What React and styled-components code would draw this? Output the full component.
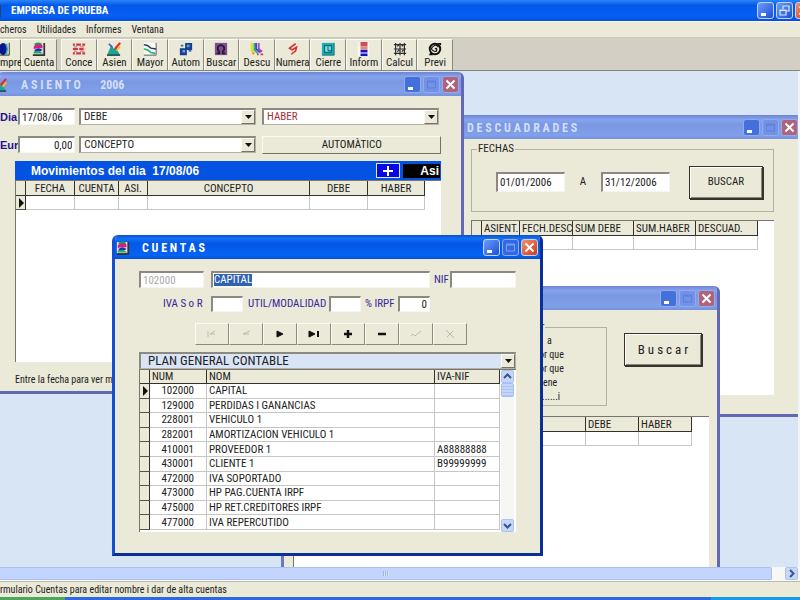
import React from "react";
import styled, { createGlobalStyle, css } from "styled-components";

const face = "#ebe9d8";
const ui = `"Roboto Condensed", Roboto, "Liberation Sans", sans-serif`;

const GlobalStyle = createGlobalStyle`
  *, *::before, *::after { box-sizing: border-box; }
  body { margin: 0; overflow: hidden; }
  button, input, select { font: inherit; color: inherit; margin: 0; border-radius: 0; }
`;

const Page = styled.div`
  display: flex;
  flex-direction: column;
  height: 100vh;
  overflow: hidden;
  background: ${face};
  color: #222;
  font: 11px/14px ${ui};
`;

const AppTitle = styled.header`
  display: flex;
  align-items: center;
  flex: 0 0 21px;
  gap: 9px;
  overflow: hidden;
  background: linear-gradient(#2a86fb, #0458e6 25%, #0460f4 75%, #0450d8);
  color: #fff;
`;

const AppIcon = styled.svg`
  flex: none;
  width: 14px;
  height: 14px;
  margin-left: -12px;
`;

const AppName = styled.h1`
  flex: 1;
  margin: 0;
  font: bold 11px/14px ${ui};
`;

const Menu = styled.nav`
  display: flex;
  align-items: center;
  flex: 0 0 17px;
  gap: 10px;
  border-top: 1px solid #f8f8f4;
  border-bottom: 1px solid #c9c6ba;
`;

const MenuItem = styled.button`
  flex: 0 0 auto;
  min-width: 22px;
  padding: 0;
  border: 0;
  background: none;
  font-size: 10px;
  line-height: 12px;
  text-align: left;
`;

const ToolStrip = styled.div`
  display: flex;
  flex: 0 0 33px;
  padding-top: 1px;
  overflow: hidden;
  background: #d3cfc5;
  border-bottom: 1px solid #85857f;
`;

const ToolGroup = styled.div`
  display: grid;
  flex: none;
  grid-template-columns: ${(p) => p.$columns};
  width: ${(p) => p.$width}px;
  margin-left: ${(p) => p.$start}px;
`;

const ToolButton = styled.button`
  display: flex;
  flex-direction: column;
  align-items: center;
  justify-content: space-between;
  min-width: 0;
  padding: 2px 0 1px;
  border: 1px solid;
  border-color: #fbfaf3 #8b897c #8b897c #fbfaf3;
  background: ${face};
  line-height: 13px;
  svg { width: 14px; height: 14px; flex: none; }
  ${(p) => p.$edge && css`align-items: flex-start; border-left: 0; svg { margin-left: -3px; }`}
`;

const Desktop = styled.main`
  position: relative;
  flex: 1;
  overflow: hidden;
  background: #d7e5f5;
  border-right: 2px solid #f0f5fa;
`;

/* Windows lie freely on the desktop and overlap each other. */
const Frame = styled.section`
  position: absolute;
  display: flex;
  flex-direction: column;
  left: ${(p) => p.$x}px;
  top: ${(p) => p.$y}px;
  width: ${(p) => p.$w}px;
  border: 3px solid ${(p) => (p.$active ? "#1450d0" : "#6c76c6")};
  border-top: 0;
  border-right-color: ${(p) => (p.$active ? "#0a2f9a" : "#6268b4")};
  border-bottom-color: ${(p) => (p.$active ? "#0a2f9a" : "#6268b4")};
  border-radius: 6px 6px 0 0;
  background: ${face};
  overflow: hidden;
`;

const Caption = styled.div`
  display: flex;
  align-items: center;
  height: 24px;
  gap: 12px;
  padding: 1px 2px 0 1px;
  color: ${(p) => (p.$active ? "#fff" : "#d3dff8")};
  background: ${(p) =>
    p.$active
      ? "linear-gradient(#0a50c8, #1270f8 15%, #0458e4 35%, #0464f4 85%, #0450d8)"
      : "linear-gradient(#6f85d4, #86a4ee 20%, #7a97e2 40%, #80a0ea 85%, #7890dc)"};
`;

const CaptionIcon = styled.svg`
  flex: none;
  width: 14px;
  height: 14px;
  margin-left: ${(p) => p.$cut || 0}px;
`;

const CaptionText = styled.h2`
  flex: 1;
  margin: 0;
  padding-left: ${(p) => p.$indent || 0}px;
  font: bold 12px/16px ${ui};
  white-space: pre;
`;

const CaptionButtons = styled.div`
  display: flex;
  gap: 2px;
  flex: none;
  margin-right: ${(p) => p.$cut || 0}px;
`;

const CaptionButton = styled.button`
  width: 17px;
  height: 17px;
  padding: 0;
  border: 1px solid ${(p) => (p.$dim ? "#94aaee" : "#c3d2fa")};
  border-radius: 3px;
  background: ${(p) => p.$fill};
  svg { display: block; width: 15px; height: 15px; }
`;

const Body = styled.div`
  display: flex;
  flex-direction: column;
  padding: ${(p) => p.$pad};
`;

const Row = styled.div`
  display: flex;
  align-items: center;
  height: ${(p) => p.$h || 17}px;
  margin: 0 0 ${(p) => p.$after || 0}px ${(p) => p.$indent || 0}px;
`;

const Label = styled.label`
  flex: 0 0 ${(p) => p.$w}px;
  padding-left: ${(p) => p.$indent || 0}px;
  color: #35289c;
  white-space: nowrap;
  ${(p) => p.$strong && css`color: #1c1490; font-weight: bold; font-family: "Liberation Sans", sans-serif; font-size: 11px;`}
`;

const Field = styled.input`
  flex: 0 0 ${(p) => p.$w}px;
  width: ${(p) => p.$w}px;
  height: ${(p) => p.$h || 17}px;
  margin-right: ${(p) => p.$after || 0}px;
  padding: 0 2px;
  border: 1px solid;
  border-width: 2px 1px 1px 2px;
  border-color: #8c8a80 #f6f5ee #f6f5ee #8c8a80;
  background: #fff;
  text-align: ${(p) => (p.$right ? "right" : "left")};
  &:disabled { color: #aaa; }
`;

const PickedField = styled.div`
  display: flex;
  align-items: center;
  flex: 0 0 219px;
  height: 17px;
  padding: 0 1px;
  border: 1px solid;
  border-width: 2px 1px 1px 2px;
  border-color: #8c8a80 #f6f5ee #f6f5ee #8c8a80;
  background: #fff;
`;

const PickedInput = styled.input`
  width: 38px;
  height: 12px;
  padding: 0;
  border: 0;
  outline: 0;
  background: #2f62b0;
  color: #fff;
`;

const ComboBox = styled.div`
  display: grid;
  grid-template-columns: 1fr 14px;
  flex: ${(p) => (p.$w ? `0 0 ${p.$w}px` : "none")};
  height: 17px;
  margin-left: ${(p) => p.$gap || 0}px;
  border: 1px solid;
  border-width: 2px 1px 1px 2px;
  border-color: #8c8a80 #b5b2a5 #b5b2a5 #8c8a80;
  background: ${(p) => p.$bg || "#fff"};
  color: ${(p) => p.$color || "#222"};
  font-size: ${(p) => p.$size || 11}px;
`;

const ComboSelect = styled.select`
  grid-area: 1 / 1 / 2 / 3;
  min-width: 0;
  width: 100%;
  padding: 0 0 0 ${(p) => p.$pad}px;
  border: 0;
  appearance: none;
  background: transparent;
`;

const ComboArrow = styled.span`
  grid-area: 1 / 2 / 2 / 3;
  display: flex;
  align-items: center;
  justify-content: center;
  border: 1px solid;
  border-color: #fbfaf3 #75736a #75736a #fbfaf3;
  background: ${face};
  pointer-events: none;
  svg { width: 7px; height: 4px; }
`;

const PushButton = styled.button`
  width: ${(p) => p.$w}px;
  height: ${(p) => p.$h}px;
  margin-left: ${(p) => p.$gap || 0}px;
  padding: 0;
  flex: none;
  background: ${face};
  font-size: ${(p) => p.$size || 11}px;
  white-space: pre;
  border: 1px solid;
  border-color: #fbfaf3 #757369 #757369 #fbfaf3;
  ${(p) => p.$default && css`border: 1px solid #35332a; box-shadow: inset 1px 1px #fff, inset -1px -1px #8a887c, 1px 1px #35332a;`}
`;

const DayBar = styled.div`
  display: flex;
  align-items: center;
  height: 19px;
  padding: 1px 1px 1px 16px;
  gap: 3px;
  background: #0452e2;
  color: #fff;
  font: bold 12px/16px "Liberation Sans", sans-serif;
  white-space: pre;
  span { flex: 1; }
`;

const AddButton = styled.button`
  display: flex;
  align-items: center;
  justify-content: center;
  width: 24px;
  height: 15px;
  padding: 0;
  border: 1px solid #dbe6fb;
  background: #0808e4;
  svg { width: 10px; height: 10px; }
`;

const EntryTag = styled.output`
  width: 37px;
  height: 14px;
  padding-right: 1px;
  background: #000;
  font-size: 12px;
  line-height: 15px;
  text-align: right;
`;

const Sheet = styled.div`
  display: flex;
  height: ${(p) => p.$h}px;
  border-left: 1px solid #77756c;
  border-top: 1px solid #77756c;
  background: #fff;
  overflow: hidden;
`;

const Table = styled.table`
  flex: none;
  width: ${(p) => p.$w}px;
  ${(p) => p.$h && css`height: ${p.$h}px;`}
  align-self: flex-start;
  table-layout: fixed;
  border-collapse: separate;
  border-spacing: 0;
  th, td {
    padding: 0 2px;
    overflow: hidden;
    white-space: nowrap;
    line-height: 13px;
  }
  thead th {
    height: ${(p) => p.$head || 15}px;
    background: ${face};
    border-right: 1px solid #33312b;
    border-bottom: 1px solid #33312b;
    font-weight: normal;
    text-align: ${(p) => (p.$centre ? "center" : "left")};
  }
  tbody td {
    height: 14px;
    border-right: 1px solid #c6c6c6;
    border-bottom: 1px solid #c6c6c6;
  }
`;

const Marker = styled.th`
  && {
    height: 14px;
    padding: 0;
    background: ${face};
    border-right: 1px solid #33312b;
    border-bottom: 1px solid #55534a;
  }
  svg { display: block; width: 6px; height: 10px; margin: 0 auto; }
`;

const Code = styled.td`
  && { text-align: right; padding-right: 12px; }
`;

const ScrollColumn = styled.div`
  display: flex;
  flex-direction: column;
  width: 13px;
  margin-left: 1px;
  background: #f6f6f2;
`;

const ScrollButton = styled.button`
  flex: 0 0 13px;
  height: 13px;
  padding: 0;
  border: 1px solid #aec3f4;
  border-radius: 2px;
  background: #c6d6fb;
  display: flex;
  align-items: center;
  justify-content: center;
  svg { width: 9px; height: 9px; }
`;

const Thumb = styled.div`
  flex: 0 0 14px;
  border: 1px solid #a8bdf2;
  border-radius: 2px;
  background: repeating-linear-gradient(#c6d6fb 0 2px, #adc2f3 2px 3px);
`;

const Spacer = styled.div`
  flex: 1;
`;

const Nav = styled.div`
  display: grid;
  grid-template-columns: repeat(8, 34px);
  height: 22px;
  margin: 11px 0 7px 56px;
`;

const NavButton = styled.button`
  display: flex;
  align-items: center;
  justify-content: center;
  padding: 0;
  border: 1px solid;
  border-color: #fbfaf3 #8b897c #8b897c #fbfaf3;
  background: ${face};
  svg { width: 12px; height: 10px; }
`;

const Group = styled.fieldset`
  flex: 0 0 ${(p) => p.$w}px;
  min-width: 0;
  margin: 0;
  padding: 0 0 0 ${(p) => p.$indent}px;
  height: ${(p) => p.$h}px;
  border: 1px solid #b3b1a4;
`;

const Legend = styled.legend`
  margin-left: ${(p) => p.$shift}px;
  padding: 0 1px;
`;

const Between = styled.span`
  flex: 0 0 36px;
  text-align: center;
`;

const Hint = styled.p`
  margin: 0;
  font-size: 10px;
  line-height: 14px;
  white-space: nowrap;
  padding-left: ${(p) => p.$indent || 0}px;
`;

const Search = styled.div`
  display: flex;
  height: 106px;
  padding-top: 10px;
`;

const SearchButtonSlot = styled.div`
  padding: 13px 0 0 17px;
`;

const HScroll = styled.div`
  display: flex;
  flex: 0 0 14px;
  padding: 0 2px 1px 0;
  gap: 13px;
  background: #f7f7f4;
`;

const HThumb = styled.div`
  flex: 1;
  display: flex;
  align-items: center;
  justify-content: center;
  border: 1px solid #a9c0f4;
  border-left: 0;
  border-radius: 0 2px 2px 0;
  background: #c3d4fd;
  &::after {
    content: "";
    width: 6px;
    height: 5px;
    background: repeating-linear-gradient(90deg, #9db5ee 0 1px, #d8e4ff 1px 2px);
  }
`;

const Status = styled.footer`
  display: flex;
  align-items: center;
  flex: 0 0 16px;
  border-top: 1px solid #bdbaae;
  font-size: 10px;
`;

const Taskbar = styled.div`
  display: grid;
  grid-template-columns: 65px 1fr 89px;
  flex: 0 0 3px;
  background: #2a6cdc;
`;

const Start = styled.div`
  background: #4aa858;
`;

const Tray = styled.div`
  grid-column: 3;
  background: #1a9ce4;
`;

const art = {
  empre: <><path d="M2 1h12v14H2z" fill="#f4e8b0" /><ellipse cx="7" cy="8" rx="5" ry="7" fill="#08178f" /><path d="M9 2q4 6 0 12h3V2z" fill="#18b4dc" /><path d="M14 1v14H2" fill="none" stroke="#222" /></>,
  cuenta: <><path d="M1 1h13v13H1z" fill="#f4d8e4" /><path d="M2 5q5-6 10-1v3H6L2 8z" fill="#d81c8c" /><path d="M3 3q5-3 8 0" stroke="#18a040" strokeWidth="2" fill="none" /><path d="M3 9q4-4 9 0l-3 2H3z" fill="#1930bc" /><path d="M2 11l6-1 5 3H2z" fill="#18b850" /><path d="M14 1v14H1" fill="none" stroke="#333" strokeWidth="2" /></>,
  conce: <><path d="M1 3h14M1 8h14M1 13h14" stroke="#c83c48" strokeWidth="2.4" /><path d="M4 1v4M11 1v4M7.500 6v4M14 6v4M4 11v4M11 11v4" stroke="#f0dcd0" strokeWidth="1.500" /><path d="M2 5.500h4M9 5.500h5M2 10.500h4M9 10.500h5" stroke="#d87880" strokeWidth="1.500" /></>,
  asien: <><path d="M0 15L5 3l3 5 2-2 5 9z" fill="#1ca494" /><path d="M2 2l4 4" stroke="#4460b8" strokeWidth="2" fill="none" /><path d="M15 1L9 8" stroke="#e82830" strokeWidth="2.500" /><path d="M15 5l-4 5" stroke="#e8c820" strokeWidth="2" /><path d="M0 15h15" stroke="#203040" strokeWidth="1.500" /></>,
  mayor: <><path d="M1 1h14v14H1z" fill="#fbfbf6" /><path d="M1 3l4 1 4 3 6 1" stroke="#203060" strokeWidth="1.600" fill="none" /><path d="M1 8l4 1 4 3 5 1" stroke="#28b860" strokeWidth="2" fill="none" /><path d="M15 1v14H1" stroke="#446" fill="none" /></>,
  autom: <><path d="M7 1h8v8H7zM1 7h8v8H1z" fill="#1b3f8c" /><path d="M9 3h3v3H9zM4 9h3v3H4z" fill="#58a8dc" /><path d="M11 10h3M2 4h3" stroke="#3b70b0" strokeWidth="2" /></>,
  buscar: <><path d="M1 1h14v14H1z" fill="#80508c" /><path d="M3 13h3V11Q3 8 5 5q3-3 6 0 2 3-1 6v2h3" stroke="#281838" strokeWidth="2" fill="none" /></>,
  descu: <><path d="M2 1v8l3 5" stroke="#e8d820" strokeWidth="2.500" fill="none" /><path d="M5 1v8l4 4" stroke="#28b868" strokeWidth="2" fill="none" /><path d="M7 1v7l5 4" stroke="#3848d0" strokeWidth="2.200" fill="none" /><path d="M10 1v7l4 3" stroke="#b040c0" strokeWidth="2" fill="none" /><path d="M8 14h2M12 14h3M3 13h1" stroke="#d83850" strokeWidth="2" /></>,
  numera: <path d="M11 2L4 7l3 2 5-3-1 4-5 4" stroke="#d82c30" strokeWidth="1.800" fill="none" />,
  cierre: <><path d="M1 1h14v14H1z" fill="#14b8bc" /><path d="M4 4h8v8H4z" fill="#7ce4e0" stroke="#106c78" strokeWidth="1.500" /><path d="M8 5v5h4" stroke="#083c58" fill="none" /><path d="M15 1v14H1" stroke="#145868" fill="none" /></>,
  inform: <><path d="M1 0h13v16H1z" fill="#fbf8f4" /><path d="M4 0h8v5H4z" fill="#c85058" /><path d="M4 5h8v4H4z" fill="#dc8888" /><path d="M4 9h8v3H4zM4 13h8v3H4z" fill="#1414bc" /></>,
  calcul: <path d="M1 3h14M1 8h14M1 13h14M3 1v14M8 1v14M13 1v14M5 5l2-2M10 5l2-2M5 11l2-2M10 11l2-2" stroke="#303030" strokeWidth="1.400" />,
  previ: <><circle cx="8" cy="8" r="6" fill="none" stroke="#111" strokeWidth="2.200" /><path d="M8 8q2-2 2 1t-4 1 0-5 6 1" fill="none" stroke="#111" strokeWidth="1.400" /><path d="M1 15h5l-3-4zM10 1h5v3z" fill="#111" /></>,
};

const Art = ({ name }) => <svg viewBox="0 0 16 16" aria-hidden="true">{art[name]}</svg>;

const tools = [
  ["conce", "Conce"], ["asien", "Asien"], ["mayor", "Mayor"], ["autom", "Autom"],
  ["buscar", "Buscar"], ["descu", "Descu"], ["numera", "Numera"], ["cierre", "Cierre"],
  ["inform", "Inform"], ["calcul", "Calcul"], ["previ", "Previ"],
];

const accounts = [
  ["102000", "CAPITAL", ""],
  ["129000", "PERDIDAS I GANANCIAS", ""],
  ["228001", "VEHICULO 1", ""],
  ["282001", "AMORTIZACION VEHICULO 1", ""],
  ["410001", "PROVEEDOR 1", "A88888888"],
  ["430001", "CLIENTE 1", "B99999999"],
  ["472000", "IVA SOPORTADO", ""],
  ["473000", "HP PAG.CUENTA IRPF", ""],
  ["475000", "HP RET.CREDITORES IRPF", ""],
  ["477000", "IVA REPERCUTIDO", ""],
];

const navGlyphs = [
  ["Primero", true, <path d="M2 2v6M9 2L4 5h5" />],
  ["Anterior", true, <path d="M10 2L3 5h6" />],
  ["Siguiente", false, <path d="M3 2l6 3-6 3z" fill="#111" />],
  ["Último", false, <><path d="M1 2l6 3-6 3z" fill="#111" /><path d="M10 2v6" strokeWidth="2" /></>],
  ["Añadir", false, <path d="M6 1v8M2 5h8" strokeWidth="2.500" />],
  ["Borrar", false, <path d="M2 5h8" strokeWidth="2.500" />],
  ["Aceptar", true, <path d="M1 7l2-2 2 2 6-5" />],
  ["Cancelar", true, <path d="M2 1l8 8M9 2L3 8" />],
];

const WindowButtons = ({ active, restore, cut }) => (
  <CaptionButtons $cut={cut}>
    <CaptionButton aria-label="Minimizar" $dim={!active} $fill={active ? "linear-gradient(135deg,#6c9cf8,#1c50d4)" : "#4470dc"}>
      <svg viewBox="0 0 15 15"><path d="M3 10h5v3H3z" fill="#fff" /></svg>
    </CaptionButton>
    <CaptionButton aria-label="Restaurar" $dim={!restore} $fill={restore ? "linear-gradient(135deg,#6c9cf8,#1c50d4)" : active ? "#3068e8" : "#7292e8"}>
      {restore ? (
        <svg viewBox="0 0 15 15"><path d="M6 6V3h6v5h-3M3 7h6v5H3zM3 7.500h6" fill="none" stroke="#dce6fc" strokeWidth="1.200" /></svg>
      ) : (
        <svg viewBox="0 0 15 15"><path d="M3.500 4h8v7h-8zM3.500 5h8" fill="none" stroke={active ? "#7ea2f4" : "#5e7cd8"} /></svg>
      )}
    </CaptionButton>
    <CaptionButton aria-label="Cerrar" $dim={!active} $fill={active ? "linear-gradient(135deg,#f09070,#d03c14)" : "#b0647c"}>
      <svg viewBox="0 0 15 15"><path d="M3.500 3.500l8 8M11.500 3.500l-8 8" stroke="#fff" strokeWidth="2" /></svg>
    </CaptionButton>
  </CaptionButtons>
);

const Combo = ({ label, value, pad = 3, ...box }) => (
  <ComboBox {...box}>
    <ComboSelect aria-label={label} $pad={pad} defaultValue={value}><option>{value}</option></ComboSelect>
    <ComboArrow><svg viewBox="0 0 7 4"><path d="M0 0h7L3.500 4z" fill="#111" /></svg></ComboArrow>
  </ComboBox>
);

const Columns = ({ widths }) => (
  <colgroup>{widths.map((w, i) => <col key={i} width={w} />)}</colgroup>
);

const Pointer = () => <svg viewBox="0 0 6 10"><path d="M1 0l5 5-5 5z" fill="#111" /></svg>;

const EmptyTable = ({ heads, widths, centre, current }) => (
  <Table $w={widths.reduce((a, b) => a + b, 0)} $centre={centre}>
    <Columns widths={widths} />
    <thead><tr><th aria-label="Fila" />{heads.map((h, i) => <th key={i} scope="col">{h}</th>)}</tr></thead>
    <tbody><tr><Marker scope="row">{current && <Pointer />}</Marker>{heads.map((h, i) => <td key={i} />)}</tr></tbody>
  </Table>
);

const Asiento = () => (
  <Frame $x={-3} $y={1} $w={467}>
    <Caption>
      <CaptionIcon viewBox="0 0 16 16" $cut={-8}>{art.asien}</CaptionIcon>
      <CaptionText $indent={2}>{"A S I E N T O       2006"}</CaptionText>
      <WindowButtons />
    </Caption>
    <Body $pad="12px 20px 4px 0">
      <Row $after={11}>
        <Label $w={18} $strong htmlFor="dia">Dia</Label>
        <Field id="dia" $w={57} defaultValue="17/08/06" />
        <Combo label="Debe" value="DEBE" $w={177} $gap={4} />
        <Combo label="Haber" value="HABER" $w={177} $gap={6} $color="#a8323a" />
      </Row>
      <Row $after={8}>
        <Label $w={18} $strong htmlFor="eur">Eur</Label>
        <Field id="eur" $w={57} $right defaultValue="0,00" />
        <Combo label="Concepto" value="CONCEPTO" $w={177} $gap={4} />
        <PushButton $w={179} $h={18} $gap={6}>AUTOMÀTICO</PushButton>
      </Row>
      <Body $pad="0 0 0 15px">
        <DayBar>
          <span>{"Movimientos del dia  17/08/06"}</span>
          <AddButton aria-label="Añadir"><svg viewBox="0 0 10 10"><path d="M5 0v10M0 5h10" stroke="#fff" strokeWidth="2" /></svg></AddButton>
          <EntryTag>Asi</EntryTag>
        </DayBar>
        <Sheet $h={182}>
          <EmptyTable centre current heads={["FECHA", "CUENTA", "ASI.", "CONCEPTO", "DEBE", "HABER"]} widths={[10, 49, 44, 29, 162, 58, 57]} />
        </Sheet>
        <Body $pad="11px 0 0"><Hint>Entre la fecha para ver m</Hint></Body>
      </Body>
    </Body>
  </Frame>
);

const Descuadrades = () => (
  <Frame $x={440} $y={44} $w={363}>
    <Caption>
      <CaptionText $indent={23}>{"D E S C U A D R A D E S"}</CaptionText>
      <WindowButtons />
    </Caption>
    <Body $pad="3px 26px 19px 28px">
      <Group $w={70} $h={70} $indent={24}>
        <Legend $shift={-19}>FECHAS</Legend>
        <Row $h={52}>
          <Field aria-label="Desde" $w={69} $h={20} defaultValue="01/01/2006" />
          <Between>A</Between>
          <Field aria-label="Hasta" $w={69} $h={20} defaultValue="31/12/2006" />
          <PushButton $default $w={74} $h={33} $gap={19}>BUSCAR</PushButton>
        </Row>
      </Group>
      <Body $pad="8px 0 0">
        <Sheet $h={175}>
          <EmptyTable heads={["ASIENT.", "FECH.DESC", "SUM DEBE", "SUM.HABER", "DESCUAD."]} widths={[10, 38, 53, 61, 62, 62]} />
        </Sheet>
      </Body>
    </Body>
  </Frame>
);

const Consulta = () => (
  <Frame $x={281} $y={215} $w={439}>
    <Caption><CaptionText /><WindowButtons /></Caption>
    <Body $pad="0 8px 8px 9px">
      <Search>
        <Group $w={314} $h={86} $indent={245}>
          <Legend $shift={1}>r</Legend>
          <Hint $indent={8}>a</Hint>
          <Hint>or que</Hint>
          <Hint>or que</Hint>
          <Hint $indent={4}>ene</Hint>
          <Hint $indent={3}>......i</Hint>
        </Group>
        <SearchButtonSlot><PushButton $default $w={78} $h={33} $size={13}>{"B u s c a r"}</PushButton></SearchButtonSlot>
      </Search>
      <Sheet $h={180}>
        <EmptyTable heads={["", "", "DEBE", "HABER"]} widths={[10, 60, 222, 53, 53]} />
      </Sheet>
    </Body>
  </Frame>
);

const Cuentas = () => (
  <Frame $active $x={112} $y={164} $w={431}>
    <Caption $active>
      <CaptionIcon viewBox="0 0 16 16">{art.cuenta}</CaptionIcon>
      <CaptionText>{"C U E N T A S"}</CaptionText>
      <WindowButtons active />
    </Caption>
    <Body $pad="12px 24px 21px">
      <Row $after={8}>
        <Field aria-label="Cuenta" disabled $w={65} $after={7} defaultValue="102000" />
        <PickedField><PickedInput aria-label="Nombre" defaultValue="CAPITAL" /></PickedField>
        <Label $w={20} $indent={4} htmlFor="nif">NIF</Label>
        <Field id="nif" $w={66} />
      </Row>
      <Row $h={16} $indent={24}>
        <Label $w={48} htmlFor="iva">IVA S o R</Label>
        <Field id="iva" $w={32} $h={16} />
        <Label $w={86} $indent={5} htmlFor="util">UTIL/MODALIDAD</Label>
        <Field id="util" $w={32} $h={16} />
        <Label $w={37} $indent={4} htmlFor="irpf">% IRPF</Label>
        <Field id="irpf" $w={32} $h={16} $right defaultValue="0" />
      </Row>
      <Nav>
        {navGlyphs.map(([name, off, glyph]) => (
          <NavButton key={name} aria-label={name} disabled={off}>
            <svg viewBox="0 0 12 10" fill="none" stroke={off ? "#bdbaac" : "#111"}>{glyph}</svg>
          </NavButton>
        ))}
      </Nav>
      <Combo label="Plan" value="PLAN GENERAL CONTABLE" pad={7} $bg="#d9e5f6" $size={13} />
      <Sheet $h={163}>
        <Table $w={360} $h={160} $head={14}>
          <Columns widths={[10, 57, 228, 65]} />
          <thead><tr><th aria-label="Fila" /><th scope="col">NUM</th><th scope="col">NOM</th><th scope="col">IVA-NIF</th></tr></thead>
          <tbody>
            {accounts.map(([num, name, nif], i) => (
              <tr key={num}>
                <Marker scope="row">{i === 0 && <Pointer />}</Marker>
                <Code>{num}</Code>
                <td>{name}</td>
                <td>{nif}</td>
              </tr>
            ))}
          </tbody>
        </Table>
        <ScrollColumn>
          <ScrollButton aria-label="Subir"><svg viewBox="0 0 9 9"><path d="M1 6l3.500-3.500L8 6" fill="none" stroke="#3c5488" strokeWidth="2" /></svg></ScrollButton>
          <Thumb />
          <Spacer />
          <ScrollButton aria-label="Bajar"><svg viewBox="0 0 9 9"><path d="M1 3l3.500 3.500L8 3" fill="none" stroke="#3c5488" strokeWidth="2" /></svg></ScrollButton>
        </ScrollColumn>
      </Sheet>
    </Body>
  </Frame>
);

export default function App() {
  return (
    <Page>
      <GlobalStyle />
      <AppTitle>
        <AppIcon viewBox="0 0 16 16">{art.empre}</AppIcon>
        <AppName>EMPRESA DE PRUEBA</AppName>
        <WindowButtons active restore cut={-12} />
      </AppTitle>
      <Menu>
        {["cheros", "Utilidades", "Informes", "Ventana"].map((m) => <MenuItem key={m}>{m}</MenuItem>)}
      </Menu>
      <ToolStrip>
        <ToolGroup $columns="21px 36px" $width={57} $start={0}>
          <ToolButton $edge><Art name="empre" />mpre</ToolButton>
          <ToolButton><Art name="cuenta" />Cuenta</ToolButton>
        </ToolGroup>
        <ToolGroup $columns="repeat(11, 1fr)" $width={392} $start={4}>
          {tools.map(([icon, name]) => <ToolButton key={name}><Art name={icon} />{name}</ToolButton>)}
        </ToolGroup>
      </ToolStrip>
      <Desktop>
        <Descuadrades />
        <Asiento />
        <Consulta />
        <Cuentas />
      </Desktop>
      <HScroll>
        <HThumb />
        <ScrollButton aria-label="Derecha"><svg viewBox="0 0 9 9"><path d="M3 1l3.500 3.500L3 8" fill="none" stroke="#3c5488" strokeWidth="2" /></svg></ScrollButton>
      </HScroll>
      <Status>rmulario Cuentas para editar nombre i dar de alta cuentas</Status>
      <Taskbar><Start /><Tray /></Taskbar>
    </Page>
  );
}
